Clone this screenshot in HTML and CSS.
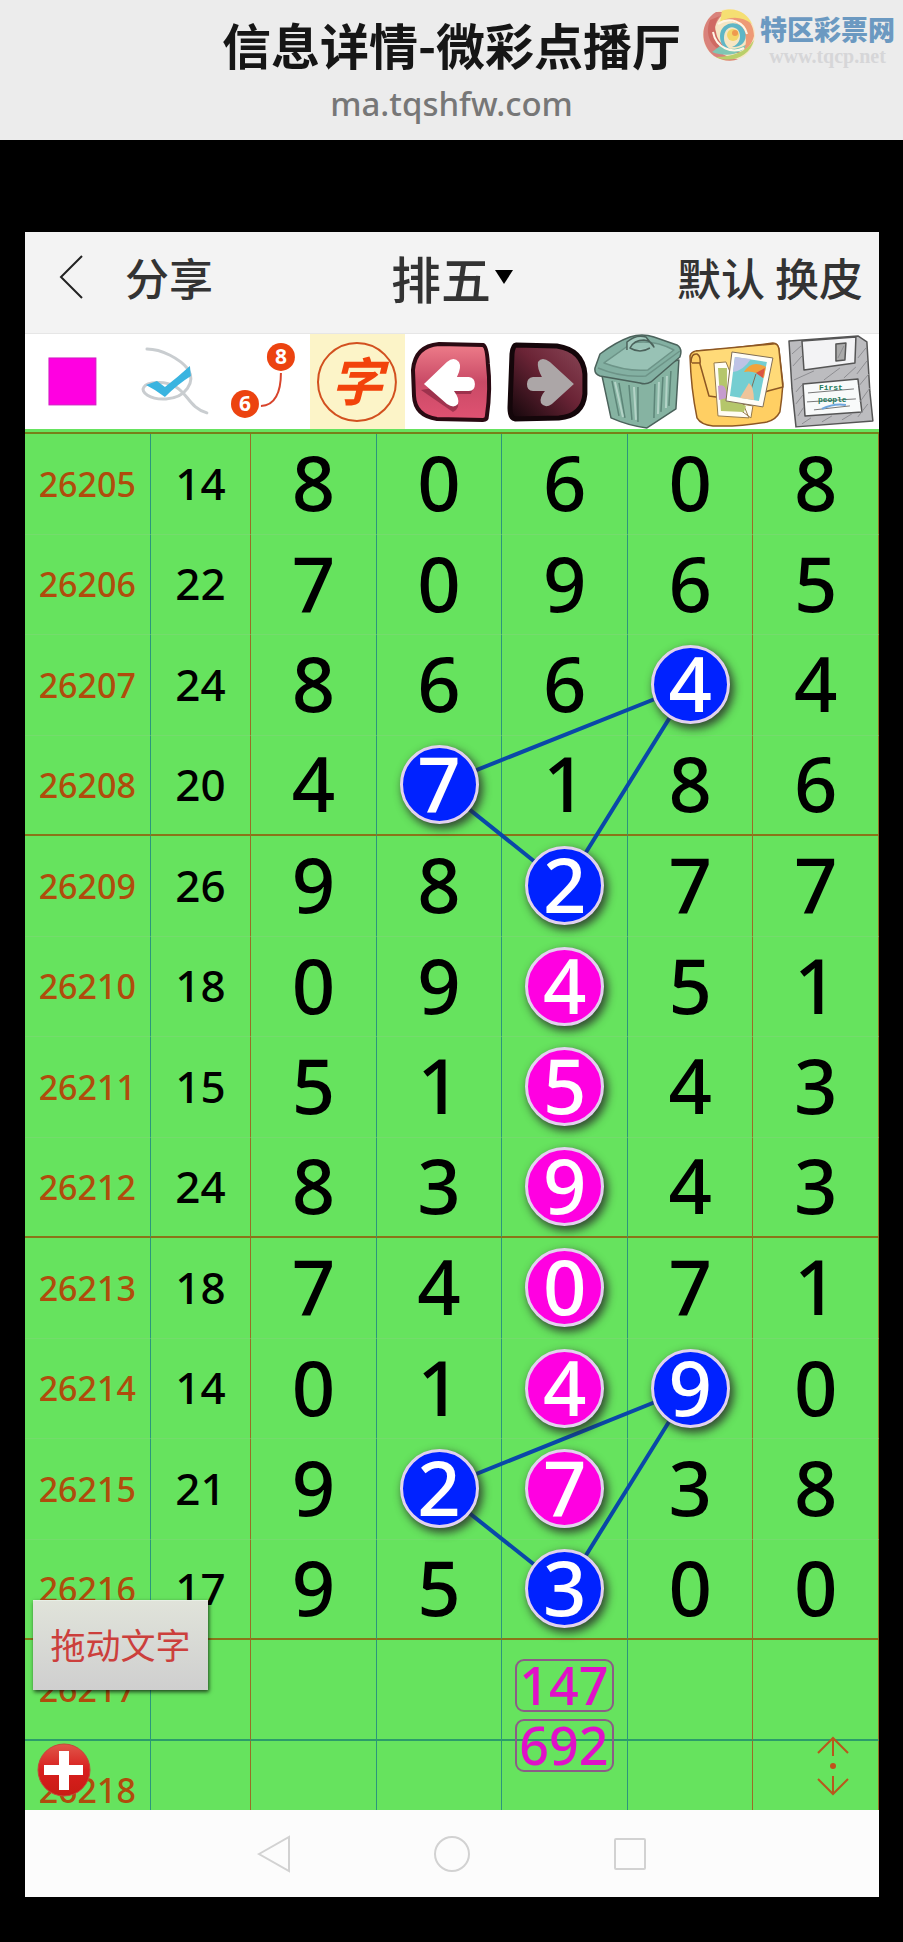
FILE: index.html
```html
<!DOCTYPE html>
<html lang="zh-CN">
<head>
<meta charset="utf-8">
<meta name="viewport" content="width=device-width, initial-scale=1">
<title>信息详情-微彩点播厅</title>
<link rel="stylesheet" href="styles.css">
</head>
<body>
<header class="page-head">
  <h1 class="page-title">信息详情-微彩点播厅</h1>
  <p class="page-url">ma.tqshfw.com</p>
  <div class="brand">
    <svg class="brand-logo" viewBox="0 0 54 54" aria-hidden="true">
      <circle cx="27" cy="27" r="26" fill="#f6e6c4"/>
      <path d="M14 4C-2 14-3 36 12 48C20 53 30 54 36 51C20 50 8 38 12 22C14 14 18 8 24 4Z" fill="#d9827b"/>
      <path d="M8 12C0 32 16 50 40 44C30 44 16 38 14 24C12 18 14 12 18 8Z" fill="#cf6a62"/>
      <path d="M10 44C26 50 44 46 50 30C44 40 30 44 18 38Z" fill="#7fc6b4"/>
      <path d="M14 49C30 56 48 48 52 32C44 44 30 49 14 49Z" fill="#b9cf6a"/>
      <path d="M18 5C34-2 52 10 52 28C50 36 46 40 42 42C48 28 40 12 22 12Z" fill="#ee9a76"/>
      <path d="M20 3C34-2 46 6 50 16C40 8 28 8 18 14Z" fill="#f5df72"/>
      <path d="M18 28C18 14 38 10 43 24C46 34 38 40 30 39C38 36 40 28 36 22C30 16 22 20 22 30C22 36 26 40 30 42C22 42 18 36 18 28Z" fill="#5fb6c6"/>
      <path d="M16 16C28 8 42 14 45 26M11 24C14 40 30 46 42 40" fill="none" stroke="#fff6e6" stroke-width="2"/>
      <circle cx="31" cy="27" r="6" fill="#f3d668"/><circle cx="33" cy="25" r="3" fill="#ef9a4e"/>
    </svg>
    <div class="brand-text">
      <strong class="brand-name">特区彩票网</strong>
      <span class="brand-site">www.tqcp.net</span>
    </div>
  </div>
</header>

<main class="app">
  <nav class="bar">
    <div class="bar-side">
      <button class="bar-btn back" type="button" aria-label="返回">
        <svg viewBox="0 0 24 44" width="24" height="44" aria-hidden="true"><path d="M23 1L2 22L23 43" fill="none" stroke="#222" stroke-width="2"/></svg>
      </button>
      <button class="bar-btn" type="button">分享</button>
    </div>
    <label class="picker">
      <select class="picker-select" aria-label="彩种"><option>排五</option></select>
      <svg viewBox="0 0 18 14" width="18" height="14" aria-hidden="true"><path d="M0 0H18L9 14Z" fill="#000"/></svg>
    </label>
    <div class="bar-side bar-end">
      <button class="bar-btn" type="button">默认</button>
      <button class="bar-btn" type="button">换皮</button>
    </div>
  </nav>

  <div class="tools">
    <button class="tool" type="button" aria-label="颜色"><svg viewBox="0 0 95 95"><rect x="24" y="24" width="47" height="47" fill="#ff00e1" stroke="#d01cc0"/></svg></button>
    <button class="tool" type="button" aria-label="选择"><svg viewBox="0 0 95 95"><g fill="none" stroke="#c9cdd0" stroke-width="3" stroke-linecap="round"><path d="M27 15C42 15 60 25 68 35C76 48 66 64 46 65C30 66 20 58 24 53C27 48 45 46 56 53C68 60 70 74 87 79"/></g><path d="M26 51L37 47L45 53Q58 43 70 32L71 42Q58 50 45 63Q36 56 26 51Z" fill="#3ab4e0"/></svg></button>
    <button class="tool" type="button" aria-label="连线"><svg viewBox="0 0 95 95"><path d="M66 39C66 58 60 72 46 72" fill="none" stroke="#d8442c" stroke-width="2"/><circle cx="66" cy="23" r="14" fill="#ec4310"/><circle cx="30" cy="70" r="14" fill="#ec4310"/><text class="dot-num" x="66" y="30">8</text><text class="dot-num" x="30" y="77">6</text></svg></button>
    <button class="tool tool-active" type="button" aria-label="文字"><svg viewBox="0 0 95 95"><circle cx="47" cy="48" r="39" fill="none" stroke="#d2501f" stroke-width="2"/><text class="brush" x="47" y="67">字</text></svg></button>
    <button class="tool" type="button" aria-label="后退"><svg viewBox="0 0 95 95"><defs><linearGradient id="pink" x1="0" y1="0" x2="0" y2="1"><stop offset="0" stop-color="#ee7d8a"/><stop offset=".5" stop-color="#c94a66"/><stop offset="1" stop-color="#e05272"/></linearGradient></defs><path d="M34 10L78 11Q82 12 83 30Q86 55 82 82Q82 86 78 86L32 85Q10 82 9 62L8 36Q10 12 34 10Z" fill="url(#pink)" stroke="#2a0a12" stroke-width="4"/><path d="M16 56L48 78Q56 74 52 66L48 60H66Q70 52 66 48" fill="#6b1830" opacity=".5"/><path d="M19 50L42 28Q49 22 54 28Q57 33 52 43H64Q70 44 70 50Q70 57 64 57H49Q55 65 53 70Q49 75 42 70Z" fill="#fff"/></svg></button>
    <button class="tool" type="button" aria-label="前进"><svg viewBox="0 0 95 95"><defs><linearGradient id="dark" x1="1" y1="0" x2="0" y2="1"><stop offset="0" stop-color="#8b4858"/><stop offset=".45" stop-color="#6b2436"/><stop offset="1" stop-color="#12060a"/></linearGradient></defs><path d="M17 11L58 12Q84 16 86 40V60Q84 82 60 84L16 85Q11 84 11 74L13 20Q14 11 17 11Z" fill="url(#dark)" stroke="#14060a" stroke-width="5"/><path d="M75 50L51 28Q43 22 39 28Q38 34 43 43H34Q28 44 28 50Q28 57 34 57H46Q40 64 42 69Q46 75 53 70Z" fill="#aca6a7"/></svg></button>
    <button class="tool" type="button" aria-label="删除"><svg viewBox="0 0 95 95"><g stroke="#4b625b" stroke-width="1.5" stroke-linejoin="round"><path d="M8 42L17 84Q35 92 53 94L82 75L85 26Z" fill="#86b3a2"/><path d="M1 34L6 20Q22 8 36 3Q48-1 60 3L83 11Q89 15 86 23L57 48Q52 51 46 49L6 42Q0 40 1 34Z" fill="#83b0a2"/><path d="M10 29L38 9Q60 5 80 16L54 36Q34 38 10 29Z" fill="#98c2b5" stroke="#6d9488"/><path d="M4 34Q28 44 52 42L86 17" fill="none" stroke="#6d9488"/><path d="M33 16V8Q42 0 52 3L60 13Q58 7 50 6Q40 6 36 14Q46 20 56 14" fill="#a4cbbf"/></g><path d="M18 47L25 82M25 49L31 84M35 51L38 86M44 53V88M61 50L60 84M69 43L67 78M77 37L75 72" fill="none" stroke="#5d8578" stroke-width="1.5"/><path d="M21 48L29 83M40 53L42 86M65 48L64 80M73 42L72 74" stroke="#b4d3c7" stroke-width="2" fill="none"/></svg></button>
    <button class="tool" type="button" aria-label="图片"><svg viewBox="0 0 95 95"><g stroke="#8d5723" stroke-width="1.5" stroke-linejoin="round"><path d="M1 22Q2 18 7 17Q45 15 84 9Q89 9 90 15L94 50Q93 65 91 78Q87 86 78 88Q50 93 24 92Q12 91 8 84Q2 55 1 22Z" fill="#ffcf63"/><path d="M2 29Q2 19 8 20Q12 22 11 30L20 62Q50 68 79 57L94 53L90 15Q89 9 84 10L7 17" fill="#ffda78"/><path d="M3 29H11" fill="none"/></g><path d="M25 29L37 28L60 84L29 82Z M40 68L64 72L62 84Z" fill="#fffdf4" stroke="#967a4a"/><path d="M29 34H38V64L57 72L55 78L32 77Z" fill="#b5c66b"/><path d="M29 52Q38 48 38 64L30 66Z" fill="#c69bce"/><path d="M43 18L84 24L74 73L37 67Z" fill="#fffdf8" stroke="#7e6c55"/><path d="M46 23L78 28L70 67L41 62Z" fill="#75ced1"/><path d="M46 23L62 25Q54 37 44 38Z" fill="#bec3e6"/><path d="M55 38Q63 25 77 33L75 44Q66 36 55 38Z" fill="#f2a33c"/><path d="M67 39L76 34L74 44Z" fill="#db5542"/><path d="M67 40L62 56" stroke="#7e6c55"/><path d="M51 64L60 49Q65 53 65 66Z" fill="#efc49a"/></svg></button>
    <button class="tool" type="button" aria-label="保存"><svg viewBox="0 0 95 95"><g stroke="#555" stroke-width="1.5" stroke-linejoin="round"><path d="M5 7L74 2L83 8L86 58L89 87L12 93L8 55Z" fill="#bcbcbf"/><path d="M18 7L72 3L71 29L20 36Z" fill="#f3f3f5"/><path d="M52 10L62 9L61 26L52 27Z" fill="#aaa"/><path d="M19 50L74 45L78 78L21 82Z" fill="#f8fafa"/></g><path d="M8 20L17 12M9 32L18 22M10 46L30 37M12 58L18 51M12 70L19 61M14 82L20 73M18 90L27 84M38 88L48 82M58 86L68 80M74 83L84 70M76 68L86 54M75 52L85 40M73 40L83 27M74 24L82 14M40 46L56 34M60 44L72 33M54 24L60 12" stroke="#8e8e92" stroke-width="1" fill="none"/><path d="M24 59L70 55M23 68L72 65M30 76L66 72" stroke="#777" stroke-width="1"/><path d="M38 75Q50 69 62 71" stroke="#6fa6dd" stroke-width="2" fill="none"/><text class="floppy-text" x="35" y="56">First</text><text class="floppy-text" x="34" y="68">people</text></svg></button>
  </div>

  <section class="chart">
    <table class="trend">
      <colgroup><col class="c-wide"><col class="c-sum"><col class="c-wide"><col class="c-wide"><col class="c-wide"><col class="c-wide"><col class="c-wide"></colgroup>
      <tbody>
        <tr><th scope="row">26205</th><td class="sum">14</td><td><b>8</b></td><td><b>0</b></td><td><b>6</b></td><td><b>0</b></td><td><b>8</b></td></tr>
        <tr><th scope="row">26206</th><td class="sum">22</td><td><b>7</b></td><td><b>0</b></td><td><b>9</b></td><td><b>6</b></td><td><b>5</b></td></tr>
        <tr><th scope="row">26207</th><td class="sum">24</td><td><b>8</b></td><td><b>6</b></td><td><b>6</b></td><td><b class="ball blue">4</b></td><td><b>4</b></td></tr>
        <tr class="group-end"><th scope="row">26208</th><td class="sum">20</td><td><b>4</b></td><td><b class="ball blue">7</b></td><td><b>1</b></td><td><b>8</b></td><td><b>6</b></td></tr>
        <tr><th scope="row">26209</th><td class="sum">26</td><td><b>9</b></td><td><b>8</b></td><td><b class="ball blue">2</b></td><td><b>7</b></td><td><b>7</b></td></tr>
        <tr><th scope="row">26210</th><td class="sum">18</td><td><b>0</b></td><td><b>9</b></td><td><b class="ball pink">4</b></td><td><b>5</b></td><td><b>1</b></td></tr>
        <tr><th scope="row">26211</th><td class="sum">15</td><td><b>5</b></td><td><b>1</b></td><td><b class="ball pink">5</b></td><td><b>4</b></td><td><b>3</b></td></tr>
        <tr class="group-end"><th scope="row">26212</th><td class="sum">24</td><td><b>8</b></td><td><b>3</b></td><td><b class="ball pink">9</b></td><td><b>4</b></td><td><b>3</b></td></tr>
        <tr><th scope="row">26213</th><td class="sum">18</td><td><b>7</b></td><td><b>4</b></td><td><b class="ball pink">0</b></td><td><b>7</b></td><td><b>1</b></td></tr>
        <tr><th scope="row">26214</th><td class="sum">14</td><td><b>0</b></td><td><b>1</b></td><td><b class="ball pink">4</b></td><td><b class="ball blue">9</b></td><td><b>0</b></td></tr>
        <tr><th scope="row">26215</th><td class="sum">21</td><td><b>9</b></td><td><b class="ball blue">2</b></td><td><b class="ball pink">7</b></td><td><b>3</b></td><td><b>8</b></td></tr>
        <tr class="group-end"><th scope="row">26216</th><td class="sum">17</td><td><b>9</b></td><td><b>5</b></td><td><b class="ball blue">3</b></td><td><b>0</b></td><td><b>0</b></td></tr>
        <tr class="next"><th scope="row">26217</th><td></td><td></td><td></td><td></td><td></td><td></td></tr>
        <tr class="next"><th scope="row">26218</th><td></td><td></td><td></td><td></td><td></td><td></td></tr>
      </tbody>
    </table>
    <svg class="links" viewBox="0 0 854 1206" preserveAspectRatio="none" aria-hidden="true">
      <path d="M665 251L414 351L540 452ZM665 954L414 1055L540 1155Z"/>
    </svg>
    <div class="notes"><span class="note">147</span><span class="note">692</span></div>
    <button class="drag" type="button">拖动文字</button>
    <button class="add" type="button" aria-label="添加">
      <svg viewBox="0 0 54 54" width="54" height="54"><defs><linearGradient id="red" x1="0" y1="0" x2="0" y2="1"><stop offset="0" stop-color="#e0574a"/><stop offset=".5" stop-color="#d81e1e"/><stop offset="1" stop-color="#c81c14"/></linearGradient></defs><circle cx="27" cy="27" r="26" fill="url(#red)" stroke="#c4483a"/><path d="M22 8H32V22H46V32H32V47H22V32H7V22H22Z" fill="#fff"/></svg>
    </button>
    <button class="scroll" type="button" aria-label="上下滚动">
      <svg viewBox="0 0 32 60" width="32" height="60"><path d="M1 17L16 2L31 17M16 3V20M1 43L16 58L31 43M16 57V40" fill="none" stroke="#b8581c" stroke-width="2"/><circle cx="16" cy="30" r="3" fill="#c0501c"/></svg>
    </button>
  </section>

  <footer class="keys">
    <button class="key" type="button" aria-label="后退键"><svg viewBox="0 0 38 38" width="38" height="38"><path d="M4 19L34 2V36Z"/></svg></button>
    <button class="key" type="button" aria-label="主页键"><svg viewBox="0 0 38 38" width="38" height="38"><circle cx="19" cy="19" r="17"/></svg></button>
    <button class="key" type="button" aria-label="任务键"><svg viewBox="0 0 38 38" width="38" height="38"><rect x="4" y="4" width="30" height="30" rx="1"/></svg></button>
  </footer>
</main>
</body>
</html>
```
FILE: styles.css
```css
* { box-sizing: border-box; }

body {
  margin: 0;
  height: 100vh;
  display: flex;
  flex-direction: column;
  background: #000;
  font-family: "Noto Sans", "Noto Sans CJK SC", sans-serif;
}

button, select {
  margin: 0;
  padding: 0;
  border: 0;
  background: none;
  font: inherit;
  color: inherit;
}

svg { display: block; }

.page-head {
  position: relative;
  flex: none;
  height: 140px;
  padding-top: 12px;
  background: #ececec;
  text-align: center;
}

.page-title {
  margin: 0;
  font-family: "Noto Sans CJK SC", sans-serif;
  font-size: 49px;
  line-height: 64px;
  font-weight: 700;
  color: #161616;
}

.page-url {
  margin: 0;
  padding-top: 4px;
  font-size: 33px;
  line-height: 48px;
  font-weight: 500;
  color: #777;
}

.brand {
  position: absolute;
  top: 8px;
  right: 8px;
  display: flex;
  gap: 4px;
}

.brand-logo { width: 54px; height: 54px; }

.brand-text {
  display: flex;
  flex-direction: column;
  align-items: center;
  padding-top: 4px;
}

.brand-name {
  font-family: "Noto Sans CJK SC", sans-serif;
  font-size: 27px;
  line-height: 34px;
  font-weight: 900;
  color: #6b99c1;
}

.brand-site {
  font-family: "Liberation Serif", serif;
  font-size: 20px;
  line-height: 20px;
  font-weight: 700;
  color: #d6d6d8;
}

.app {
  flex: 1;
  min-height: 0;
  margin: 92px 24px 45px 25px;
  display: flex;
  flex-direction: column;
  background: #fff;
}

.bar {
  flex: none;
  height: 102px;
  padding: 0 16px 12px 34px;
  display: grid;
  grid-template-columns: 1fr auto 1fr;
  align-items: center;
  background: #f3f3f3;
  border-bottom: 1px solid #e6e6e6;
  color: #333;
  font-family: "Noto Sans CJK SC", sans-serif;
  font-weight: 500;
}

.bar-side {
  display: flex;
  align-items: center;
  gap: 42px;
}

.bar-end {
  justify-content: flex-end;
  gap: 10px;
}

.bar-btn {
  font-size: 44px;
  line-height: 64px;
}

.picker {
  display: flex;
  align-items: center;
  gap: 4px;
  margin-right: 18px;
}

.picker-select {
  appearance: none;
  font-size: 50px;
  line-height: 72px;
}

.tools {
  flex: none;
  display: grid;
  grid-template-columns: repeat(9, 1fr);
}

.tool svg { width: 100%; }

.tool-active { background: #fcf4c8; }

.dot-num {
  font-size: 21px;
  font-weight: 700;
  fill: #fff;
  text-anchor: middle;
}

.brush {
  font-family: "Noto Sans CJK SC", sans-serif;
  font-size: 52px;
  font-weight: 700;
  font-style: italic;
  fill: #f2430b;
  text-anchor: middle;
}

.floppy-text {
  font-family: "Liberation Mono", monospace;
  font-size: 8px;
  font-weight: 700;
  fill: #1d7a5c;
}

.chart {
  position: relative;
  flex: 1;
  min-height: 0;
  overflow: hidden;
  padding-top: 3px;
  background: #66e35e;
}

.trend {
  width: 100%;
  table-layout: fixed;
  border-collapse: separate;
  border-spacing: 0;
  border-top: 2px solid #77801a;
}

.c-wide { width: 14.7%; }
.c-sum { width: 11.8%; }

.trend tr { height: 101px; }
.trend tr:nth-child(even) { height: 100px; }

.trend th,
.trend td {
  padding: 0;
  vertical-align: middle;
  text-align: center;
  border-right: 1px solid #2b967c;
  border-bottom: 1px solid #74dc6c;
}

.trend .sum,
.trend td:nth-child(2),
.trend td:nth-child(6),
.trend td:nth-child(7) { border-right-color: #9a6c26; }

.trend th {
  font-size: 34px;
  line-height: 40px;
  font-weight: 500;
  color: #b04c0c;
}

.trend .sum {
  font-size: 44px;
  line-height: 60px;
  font-weight: 500;
  padding-bottom: 2px;
  color: #000;
}

.trend .group-end > * { border-bottom: 2px solid #8a7419; }
.trend .next > * { border-bottom: 2px solid #2c9c6a; }

.trend b {
  display: grid;
  place-items: center;
  width: 79px;
  height: 79px;
  margin: 0 auto;
  padding-bottom: 4px;
  font-size: 76px;
  line-height: 75px;
  font-weight: 500;
  color: #000;
}

.trend .ball {
  position: relative;
  z-index: 2;
  border: 3px solid #e2d2ee;
  border-radius: 50%;
  line-height: 69px;
  color: #fff;
  box-shadow: 3px 4px 8px 1px rgba(40, 40, 40, 0.8);
}

.trend .blue { background: #0022ff; }
.trend .pink { background: #ff00e1; }

.links {
  position: absolute;
  top: 5px;
  left: 0;
  z-index: 1;
  width: 100%;
  height: 1206px;
  fill: none;
  stroke: #0a48a8;
  stroke-width: 4;
}

.notes {
  position: absolute;
  top: 1230px;
  right: 31%;
  z-index: 2;
  display: flex;
  flex-direction: column;
  gap: 7px;
}

.note {
  width: 99px;
  height: 53px;
  padding-left: 2px;
  border: 2px solid #8c5c86;
  border-radius: 9px;
  font-size: 52px;
  line-height: 48px;
  font-weight: 500;
  color: #e010c8;
}

.drag {
  position: absolute;
  left: 8px;
  bottom: 120px;
  z-index: 3;
  width: 175px;
  height: 90px;
  padding-bottom: 4px;
  border-top: 1px solid #e8efe6;
  background: linear-gradient(#e0e3da, #cfcfcf);
  box-shadow: 1px 2px 4px rgba(0, 0, 0, 0.7);
  font-family: "Noto Sans CJK SC", sans-serif;
  font-size: 35px;
  color: #cc3f3c;
}

.add {
  position: absolute;
  left: 12px;
  bottom: 13px;
  z-index: 3;
}

.scroll {
  position: absolute;
  right: 30px;
  bottom: 14px;
  z-index: 3;
}

.keys {
  flex: none;
  height: 87px;
  display: flex;
  justify-content: center;
  align-items: center;
  gap: 140px;
  background: #fcfcfc;
}

.key svg {
  fill: none;
  stroke: #d2d2d2;
  stroke-width: 2;
}
```
